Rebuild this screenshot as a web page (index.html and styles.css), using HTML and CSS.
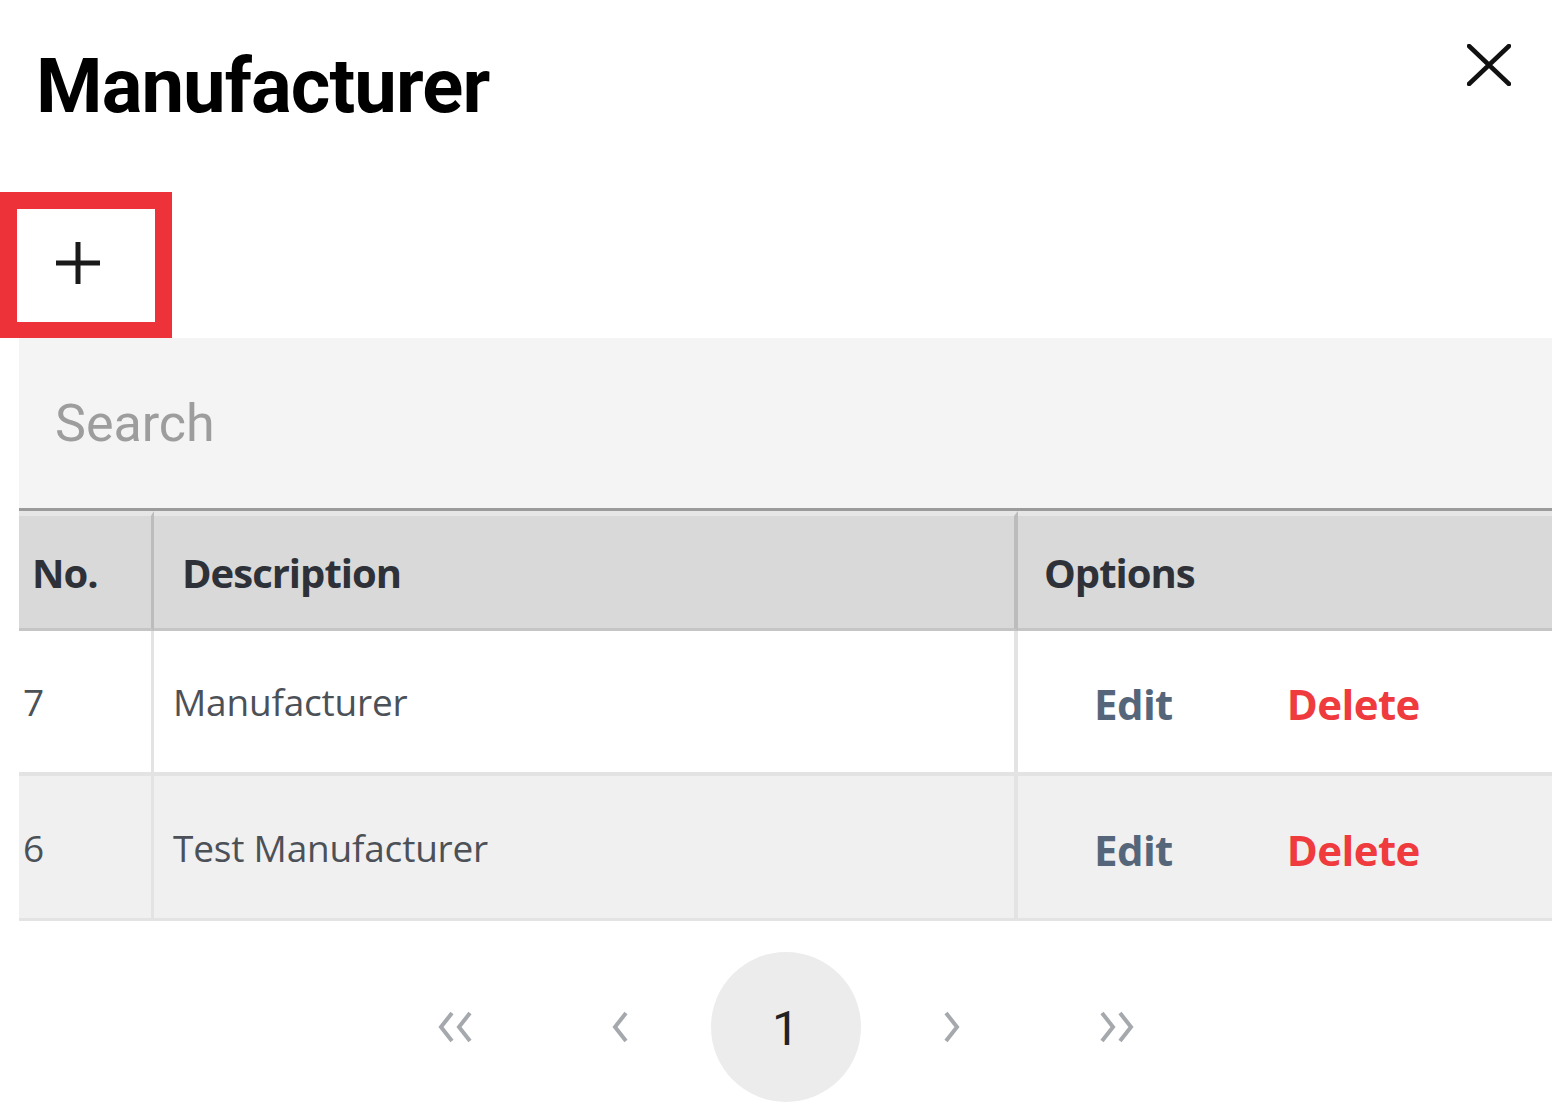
FILE: index.html
```html
<!DOCTYPE html>
<html lang="en">
<head>
<meta charset="utf-8">
<title>Manufacturer</title>
<link rel="stylesheet" href="styles.css">
</head>
<body>
<div class="modal">
  <header class="modal-head">
    <h1 class="title">Manufacturer</h1>
    <button class="close" aria-label="Close">
      <svg width="44" height="42" viewBox="0 0 44 42"><path d="M2 2 L42 40 M42 2 L2 40" stroke="#111" stroke-width="4.5" stroke-linecap="round" fill="none"/></svg>
    </button>
  </header>
  <div class="toolbar">
    <button class="add" aria-label="Add">
      <svg width="46" height="44" viewBox="0 0 46 44"><path d="M23 1 V43 M1 22 H45" stroke="#1a1a1a" stroke-width="5" fill="none"/></svg>
    </button>
  </div>
  <div class="panel">
    <div class="search"><input class="search-input" type="text" placeholder="Search"></div>
    <table class="grid">
      <thead>
        <tr>
          <th class="c-no">No.</th>
          <th class="c-desc">Description</th>
          <th class="c-opt">Options</th>
        </tr>
      </thead>
      <tbody>
        <tr>
          <td class="c-no">7</td>
          <td class="c-desc">Manufacturer</td>
          <td class="c-opt"><span class="edit">Edit</span><span class="del">Delete</span></td>
        </tr>
        <tr class="alt">
          <td class="c-no">6</td>
          <td class="c-desc">Test Manufacturer</td>
          <td class="c-opt"><span class="edit">Edit</span><span class="del">Delete</span></td>
        </tr>
      </tbody>
    </table>
    <nav class="pager">
      <span class="pg"><svg width="40" height="34" viewBox="0 0 40 34"><path d="M16 3 L5 17 L16 31 M34 3 L23 17 L34 31" stroke="#a5a9ad" stroke-width="4" fill="none"/></svg></span>
      <span class="pg"><svg width="22" height="34" viewBox="0 0 22 34"><path d="M16 3 L5 17 L16 31" stroke="#a5a9ad" stroke-width="4" fill="none"/></svg></span>
      <span class="pg current">1</span>
      <span class="pg"><svg width="22" height="34" viewBox="0 0 22 34"><path d="M6 3 L17 17 L6 31" stroke="#a5a9ad" stroke-width="4" fill="none"/></svg></span>
      <span class="pg"><svg width="40" height="34" viewBox="0 0 40 34"><path d="M6 3 L17 17 L6 31 M24 3 L35 17 L24 31" stroke="#a5a9ad" stroke-width="4" fill="none"/></svg></span>
    </nav>
  </div>
</div>
</body>
</html>
```
FILE: styles.css
```css
html, body {
  margin: 0;
  padding: 0;
  background: #ffffff;
}
body {
  width: 1552px;
  height: 1115px;
  overflow: hidden;
  font-family: Roboto, "Liberation Sans", sans-serif;
}
.modal-head {
  display: flex;
  justify-content: space-between;
  align-items: flex-start;
  height: 192px;
}
.title {
  margin: 0;
  padding: 42px 0 0 36px;
  font-family: Roboto, sans-serif;
  font-weight: 700;
  font-size: 76px;
  line-height: 89px;
  color: #000;
  letter-spacing: -0.9px;
}
.close {
  margin: 44px 41px 0 0;
  padding: 0;
  border: none;
  background: none;
  display: flex;
}
.toolbar {
  display: flex;
}
.add {
  box-sizing: border-box;
  width: 172px;
  height: 146px;
  border: 17px solid #ee3239;
  border-bottom-width: 16px;
  background: #fff;
  padding: 0 16px 6px 0;
  display: flex;
  align-items: center;
  justify-content: center;
}
.panel {
  margin-left: 19px;
}
.search {
  height: 170px;
  background: #f4f4f4;
  border-bottom: 3px solid #9b9b9b;
  display: flex;
  align-items: center;
}
.search-input {
  border: none;
  background: transparent;
  outline: none;
  padding: 0 0 0 36px;
  width: 100%;
  font-family: Roboto, sans-serif;
  font-size: 52px;
  color: #333;
}
.search-input::placeholder {
  color: #9d9d9d;
}
.grid {
  width: 100%;
  border-collapse: separate;
  border-spacing: 0;
  font-family: "Open Sans", sans-serif;
}
.grid th {
  height: 112px;
  background: #d9d9d9;
  border-top: 5px solid #e6e6e6;
  border-bottom: 3px solid #c5c5c5;
  text-align: left;
  font-weight: 700;
  font-size: 40px;
  letter-spacing: -1px;
  color: #2e3238;
  padding: 0;
  vertical-align: middle;
}
.grid th.c-no { padding-left: 13px; border-right: 3px solid #bcbcbc; }
.grid th.c-desc { padding-left: 28px; border-right: 4px solid #bcbcbc; }
.grid th.c-opt { padding-left: 26px; }
.grid td {
  height: 141px;
  padding: 0;
  border-bottom: 4px solid #e3e3e3;
  font-size: 37px;
  color: #4c5158;
  vertical-align: middle;
  letter-spacing: -0.2px;
}
.grid td > * { position: relative; top: 2px; }
.grid tbody tr.alt td { background: #f0f0f0; border-bottom-width: 3px; height: 142px; }
.grid td.c-no { width: 128px; padding-left: 4px; border-right: 3px solid #e3e3e3; }
.grid td.c-desc { width: 841px; padding-left: 19px; border-right: 4px solid #e3e3e3; }
.grid td.c-opt { padding-left: 76px; }
.edit, .del {
  font-weight: 700;
  font-size: 42px;
  letter-spacing: -0.6px;
}
.edit { color: #56667a; margin-right: 114px; }
.del { color: #ef3b3e; }
.pager {
  display: flex;
  justify-content: center;
  gap: 15px;
  margin-top: 31px;
}
.pg {
  width: 150px;
  height: 150px;
  display: flex;
  align-items: center;
  justify-content: center;
}
.current {
  border-radius: 50%;
  background: #ececec;
  font-family: Roboto, sans-serif;
  font-size: 48px;
  color: #222;
  padding-top: 2px;
  box-sizing: border-box;
}
```
